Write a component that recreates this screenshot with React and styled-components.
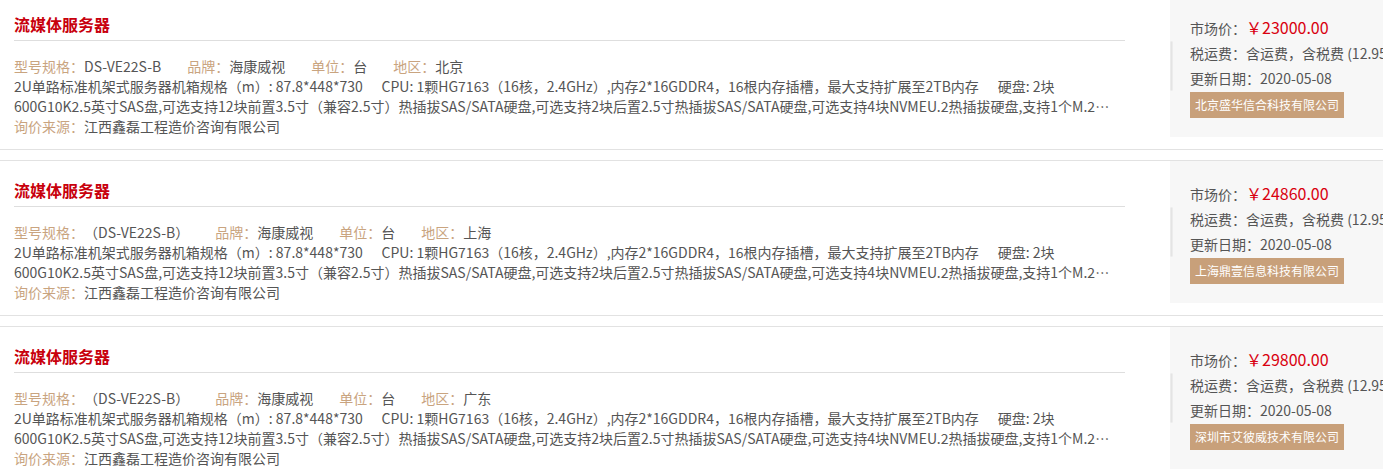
import React from "react";
import styled, { createGlobalStyle } from "styled-components";

const GlobalStyle = createGlobalStyle`
  body {
    margin: 0;
    background: #fff;
    overflow: hidden;
    font-family: "Noto Sans CJK SC", "Noto Sans", sans-serif;
    text-spacing-trim: space-all;
  }
`;

const List = styled.div`
  width: 1420px;
  margin-top: -6px;
`;

const Item = styled.div`
  display: flex;
  padding-bottom: 12px;
  margin-bottom: 10px;
  border-top: 1px solid #e2e2e2;
  border-bottom: 1px solid #e2e2e2;
`;

const Main = styled.div`
  width: 1111px;
  margin: 0 45px 0 14px;
  padding-top: 17px;
`;

const Title = styled.h3`
  margin: 0;
  padding-bottom: 4px;
  border-bottom: 1px solid #dedede;
  font-size: 16px;
  line-height: 24px;
  font-weight: bold;
  color: #c8000c;
`;

const Info = styled.div`
  display: flex;
  gap: 26px;
  margin-top: 15px;
  font-size: 14px;
  line-height: 20px;
  color: #555;
`;

const Label = styled.span`
  color: #c9a47f;
`;

const Desc = styled.div`
  font-size: 14px;
  line-height: 20px;
  color: #555;
  display: -webkit-box;
  -webkit-box-orient: vertical;
  -webkit-line-clamp: 2;
  overflow: hidden;
`;

const Source = styled.div`
  font-size: 14px;
  line-height: 20px;
  color: #555;
`;

const Side = styled.div`
  position: relative;
  width: 230px;
  height: 142px;
  box-sizing: border-box;
  padding: 20px 0 0 20px;
  background: #f7f7f7;
  font-size: 14px;
  line-height: 25px;
  color: #555;
  white-space: nowrap;
`;

const Grip = styled.div`
  position: absolute;
  left: 0;
  top: 46px;
  width: 3px;
  height: 50px;
  border-radius: 2px;
  background: #e4e4e4;
  border: 1px solid #ececec;
  box-sizing: border-box;
`;

const Price = styled.span`
  color: #d9000f;
  font-size: 16px;
`;

const Company = styled.div`
  display: inline-block;
  height: 26px;
  padding: 0 5px;
  margin-top: 1px;
  background: #c8a07a;
  color: #fff;
  font-size: 12px;
  line-height: 26px;
`;

const gap = "\u00a0".repeat(6);

const desc =
  "2U单路标准机架式服务器机箱规格（m）: 87.8*448*730" +
  gap +
  "CPU: 1颗HG7163（16核，2.4GHz）,内存2*16GDDR4，16根内存插槽，最大支持扩展至2TB内存" +
  gap +
  "硬盘: 2块600G10K2.5英寸SAS盘,可选支持12块前置3.5寸（兼容2.5寸）热插拔SAS/SATA硬盘,可选支持2块后置2.5寸热插拔SAS/SATA硬盘,可选支持4块NVMEU.2热插拔硬盘,支持1个M.2 SSD，支持RAID 0/1/5/10";

const items = [
  { model: "DS-VE22S-B", region: "北京", price: "23000.00", company: "北京盛华信合科技有限公司" },
  { model: "（DS-VE22S-B）", region: "上海", price: "24860.00", company: "上海鼎壹信息科技有限公司" },
  { model: "（DS-VE22S-B）", region: "广东", price: "29800.00", company: "深圳市艾彼威技术有限公司" },
];

export default function App() {
  return (
    <>
      <GlobalStyle />
      <List>
        {items.map((it, i) => (
          <Item key={i}>
            <Main>
              <Title>流媒体服务器</Title>
              <Info>
                <span>
                  <Label>型号规格：</Label>
                  {it.model}
                </span>
                <span>
                  <Label>品牌：</Label>海康威视
                </span>
                <span>
                  <Label>单位：</Label>台
                </span>
                <span>
                  <Label>地区：</Label>
                  {it.region}
                </span>
              </Info>
              <Desc>{desc}</Desc>
              <Source>
                <Label>询价来源：</Label>江西鑫磊工程造价咨询有限公司
              </Source>
            </Main>
            <Side>
              <Grip />
              <div>
                市场价：<Price>￥{it.price}</Price>
              </div>
              <div>税运费：含运费，含税费 (12.95%)</div>
              <div>更新日期：2020-05-08</div>
              <Company>{it.company}</Company>
            </Side>
          </Item>
        ))}
      </List>
    </>
  );
}
